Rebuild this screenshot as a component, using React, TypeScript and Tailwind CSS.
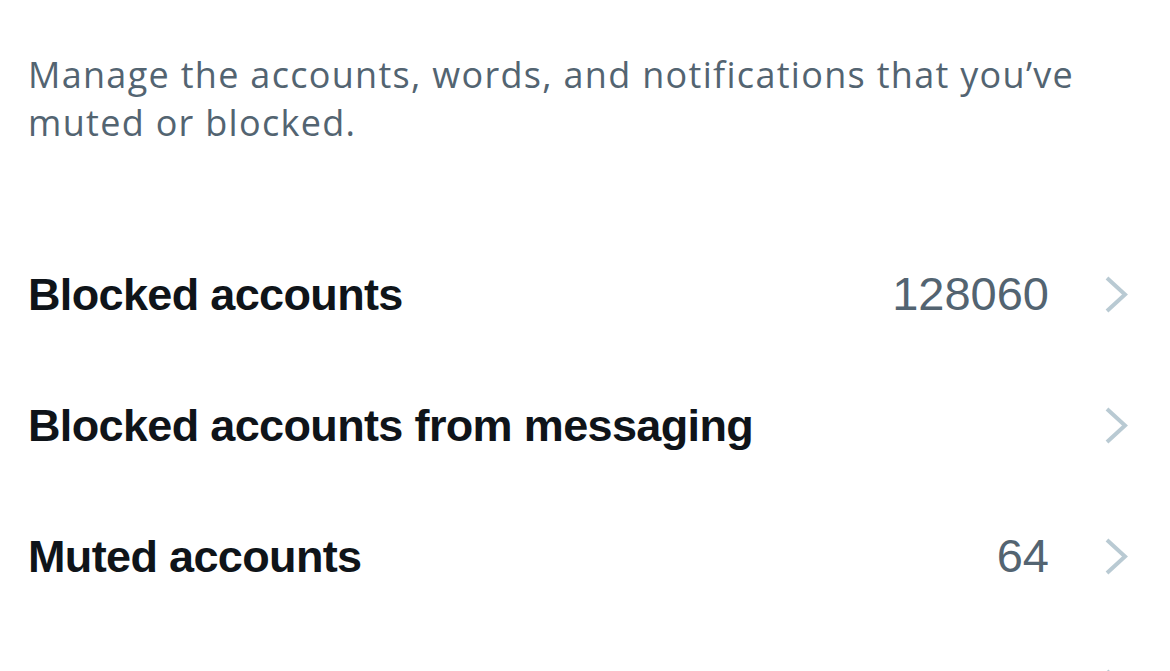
import React from "react";

type Row = { label: string; count?: string };

const rows: Row[] = [
  { label: "Blocked accounts", count: "128060" },
  { label: "Blocked accounts from messaging" },
  { label: "Muted accounts", count: "64" },
  { label: "Muted words", count: "13" },
];

const Chevron = () => (
  <svg width="25" height="37" viewBox="0 0 25 37" fill="none" className="shrink-0">
    <polyline
      points="3,2 21,18.5 3,35"
      stroke="#b9cad3"
      strokeWidth="4"
      strokeLinecap="butt"
      strokeLinejoin="miter"
    />
  </svg>
);

export default function App() {
  return (
    <div className="w-[1170px] h-[671px] overflow-hidden bg-white font-['Liberation_Sans',Arial,sans-serif]">
      {/* description */}
      <p className="pt-[51px] px-[28px] font-['Open_Sans',sans-serif] text-[36px] leading-[48px] text-[#536471] tracking-[1.3px] whitespace-nowrap">
        Manage the accounts, words, and notifications that you’ve
        <br />
        muted or blocked.
      </p>

      {/* settings rows */}
      <div className="mt-[82px]">
        {rows.map((r) => (
          <div key={r.label} className="flex items-center h-[131px] pl-[28px] pr-[41px]">
            <span className="flex-1 text-[45px] font-bold tracking-[-0.65px] text-[#0f1419]">
              {r.label}
            </span>
            {r.count && (
              <span className="text-[47px] text-[#536471] mr-[55px]">{r.count}</span>
            )}
            <Chevron />
          </div>
        ))}
      </div>
    </div>
  );
}
